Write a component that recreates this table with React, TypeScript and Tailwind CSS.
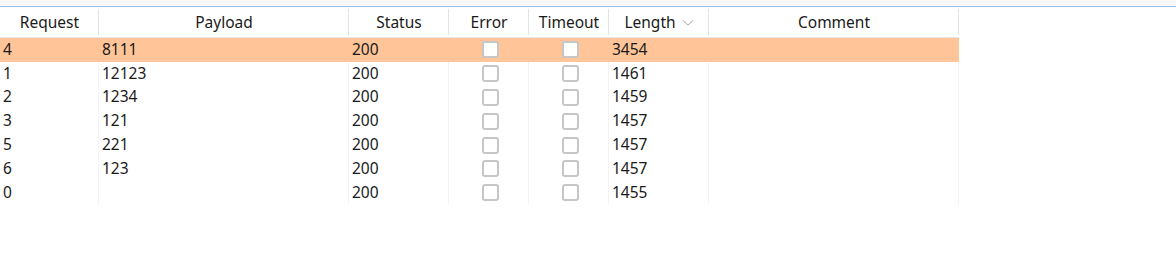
type Row = {
    id: string;
    payload: string;
    status: string;
    length: string;
};

const rows: Row[] = [
    { id: "4", payload: "8111", status: "200", length: "3454" },
    { id: "1", payload: "12123", status: "200", length: "1461" },
    { id: "2", payload: "1234", status: "200", length: "1459" },
    { id: "3", payload: "121", status: "200", length: "1457" },
    { id: "5", payload: "221", status: "200", length: "1457" },
    { id: "6", payload: "123", status: "200", length: "1457" },
    { id: "0", payload: "", status: "200", length: "1455" },
];

const Checkbox = () => (
    <span className="block w-[17px] h-[17px] ml-[3px] rounded-[3px] border-2 border-[#c6c6c6] bg-white" />
);

const HeaderCell = ({ label, width, sort }: { label: string; width: string; sort?: boolean }) => (
    <div className={`${width} h-full flex items-center justify-center relative pt-[1px]`}>
        <span className="flex items-center gap-1">
            {label}
            {sort && (
                <svg width="12" height="8" viewBox="0 0 12 8" className="ml-0.5">
                    <path d="M1 1.5 L6 6 L11 1.5" fill="none" stroke="#a8a8a8" strokeWidth="1" />
                </svg>
            )}
        </span>
        <span className="absolute right-0 top-[2px] bottom-[2px] w-px bg-[#e3e3e3]" />
    </div>
);

const App = () => {
    return (
        <div
            className="w-[1176px] h-[277px] bg-white text-[15.5px] text-[#1a1a1a]"
            style={{ fontFamily: '"Noto Sans", "Open Sans", sans-serif' }}
        >
            <div className="h-[6px] bg-[#f7f7f7]" />
            <div className="h-px bg-[#9cc2ec]" />

            {/* column headers */}
            <div className="flex h-[31px] border-b border-[#e6e6e6] w-[959px]">
                <HeaderCell label="Request" width="w-[99px]" />
                <HeaderCell label="Payload" width="w-[250px]" />
                <HeaderCell label="Status" width="w-[100px]" />
                <HeaderCell label="Error" width="w-[80px]" />
                <HeaderCell label="Timeout" width="w-[80px]" />
                <HeaderCell label="Length" width="w-[100px]" sort />
                <HeaderCell label="Comment" width="w-[250px]" />
            </div>

            <div className="w-[959px]">
                {rows.map((r, i) => {
                    const line = i === 0 ? "border-transparent" : "border-[#f3f3f3]";
                    return (
                        <div
                            key={r.id}
                            className={`flex h-[23.8px] items-center ${i === 0 ? "bg-[#ffc599]" : ""}`}
                        >
                            <div className={`w-[99px] h-full flex items-center pl-[3px] pb-[1px] border-r ${line}`}>
                                {r.id}
                            </div>
                            <div className={`w-[250px] h-full flex items-center pl-[3px] pb-[1px] border-r ${line}`}>
                                {r.payload}
                            </div>
                            <div className={`w-[100px] h-full flex items-center pl-[3px] pb-[1px] border-r ${line}`}>
                                {r.status}
                            </div>
                            <div className={`w-[80px] h-full flex items-center justify-center border-r ${line}`}>
                                <Checkbox />
                            </div>
                            <div className={`w-[80px] h-full flex items-center justify-center border-r ${line}`}>
                                <Checkbox />
                            </div>
                            <div className={`w-[100px] h-full flex items-center pl-[3px] pb-[1px] border-r ${line}`}>
                                {r.length}
                            </div>
                            <div className={`w-[250px] h-full border-r ${line}`} />
                        </div>
                    );
                })}
            </div>
        </div>
    );
};

export default App;
